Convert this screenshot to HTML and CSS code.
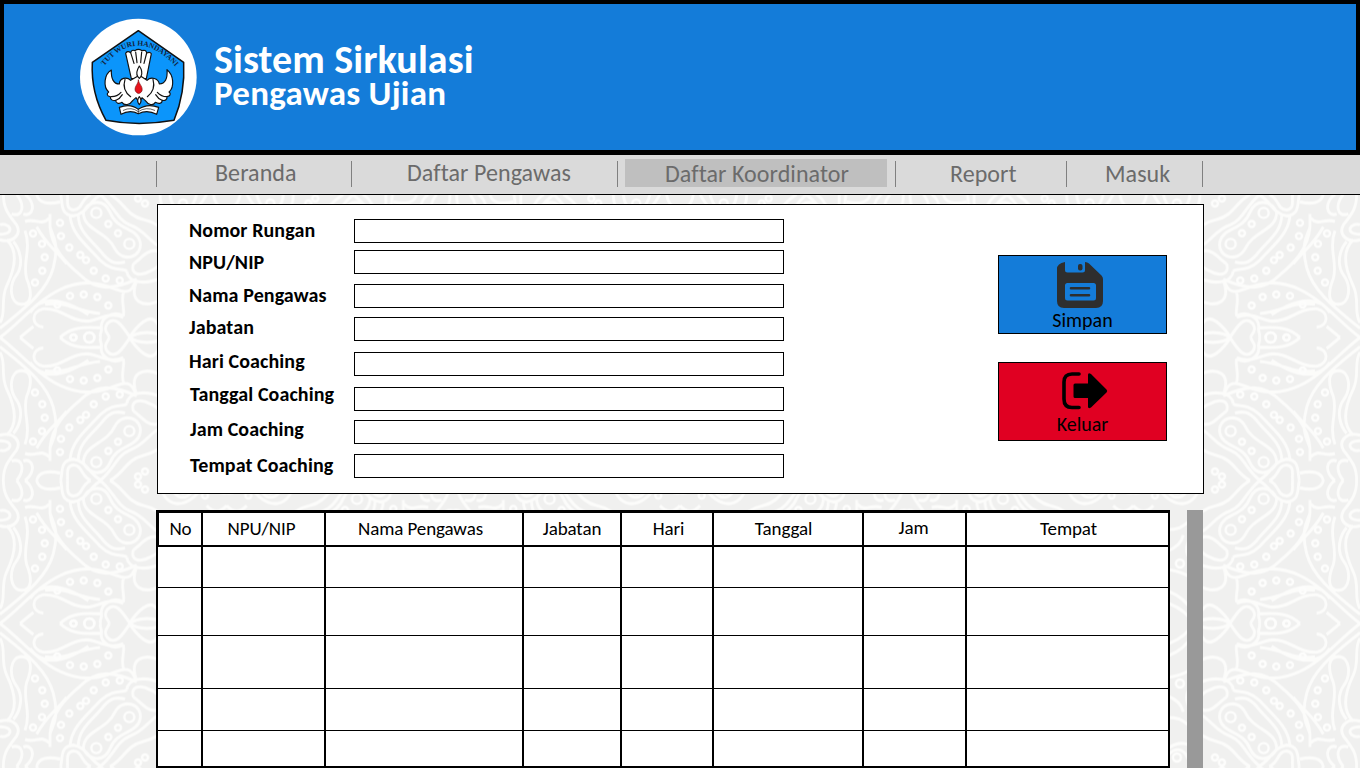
FILE: index.html
```html
<!DOCTYPE html>
<html lang="id">
<head>
<meta charset="utf-8">
<title>Sistem Sirkulasi Pengawas Ujian</title>
<link rel="stylesheet" href="styles.css">
</head>
<body>
<svg class="batik" width="1360" height="574" viewBox="0 194 1360 574" aria-hidden="true">
  <defs>
    <g id="quarter">
      <g transform="scale(.3333 .3686) translate(0 -400)">
        <path d="M0 400C60 440 110 500 180 530S300 548 350 530S400 545 410 558M0 425C60 470 140 520 160 590S155 680 150 700V735M60 400L100 430M180 400C210 425 240 430 302 426M130 428C95 430 90 470 130 478C190 480 210 440 270 445C300 450 330 470 370 455M390 400C365 435 345 460 322 438C308 420 324 412 328 400M370 458C335 475 300 450 304 426C306 415 298 410 302 400M370 458C375 480 360 500 372 528M388 400C410 430 450 470 470 440C485 425 480 410 500 400M410 555C385 495 430 480 480 500C500 520 500 540 480 560M65 490C30 490 25 540 50 570C72 600 60 640 40 660M65 490C95 490 98 520 80 560C66 600 95 640 75 690M0 440C20 470 0 500 20 540C52 600 50 640 20 665M0 665C40 655 65 680 50 705C25 735 10 750 10 788M0 680C25 680 38 690 25 702C10 712 0 705 0 705M35 735C70 725 75 760 50 788M70 735C100 725 110 765 75 788M110 788C115 765 145 760 180 768M75 715C110 725 120 700 150 725M210 730C215 680 260 650 300 610C340 575 370 590 380 580M235 730C235 685 280 660 310 625C335 600 350 600 375 605M150 700C155 640 200 600 240 570C290 525 340 530 410 558M305 788C270 775 262 735 220 730C180 732 188 765 182 788M272 788C240 775 250 748 220 746C195 750 205 770 202 788M250 740C250 690 320 690 345 640C370 600 430 620 420 660C410 700 350 690 330 740C310 780 265 770 250 740M380 580C385 545 440 545 480 560C520 570 530 600 510 630M400 600C390 570 420 565 450 580C480 590 500 620 470 635C440 640 420 610 400 600M300 788C340 760 350 720 390 705C440 690 450 650 500 640M330 788C370 770 380 730 430 720C480 710 500 680 540 660M390 400C410 385 460 380 500 400M500 400C530 450 600 470 680 470M500 430C540 490 600 500 680 500M500 520C560 560 620 540 680 560M530 640C540 600 600 580 680 590M480 788C480 720 560 690 620 788M510 788C515 735 570 720 590 788M540 660C600 640 640 680 680 640M620 720C640 700 660 700 680 720M640 788C645 760 660 750 680 755M90 468C130 520 200 500 265 462M135 490C200 500 230 470 300 465M110 700C140 650 165 640 200 600"/>
      </g>
      <g class="ring">
        <circle cx="57.3" cy="33" r="3"/><circle cx="70" cy="41.6" r="3"/><circle cx="83.7" cy="43" r="3"/><circle cx="97.3" cy="40.5" r="3"/><circle cx="108.3" cy="32" r="3"/><circle cx="35" cy="55" r="3"/><circle cx="42.3" cy="66.7" r="3"/><circle cx="44.7" cy="80.3" r="3"/><circle cx="42" cy="93.6" r="3"/><circle cx="33" cy="104" r="3"/><circle cx="93.7" cy="66.7" r="3"/><circle cx="105.7" cy="59" r="3"/><circle cx="119.7" cy="57" r="3"/><circle cx="69.3" cy="90" r="3"/><circle cx="80.3" cy="82.5" r="3"/><circle cx="86" cy="77.4" r="3"/><circle cx="61" cy="101.4" r="3"/><circle cx="60" cy="114.6" r="3"/><circle cx="73.5" cy="0" r="3"/><circle cx="108.3" cy="113.5" r="3"/><circle cx="118" cy="104.3" r="3"/><circle cx="89.3" cy="0" r="5"/><circle cx="129.3" cy="93.6" r="5"/><circle cx="96.3" cy="124.6" r="5"/><circle cx="145" cy="134" r="3"/><circle cx="138" cy="139" r="3"/><circle cx="183" cy="134" r="4"/><circle cx="205" cy="128" r="3"/><circle cx="180" cy="60" r="4"/><circle cx="205" cy="12" r="4"/>
      </g>
    </g>
    <g id="halftile">
      <use href="#quarter"/>
      <use href="#quarter" transform="scale(1 -1)"/>
    </g>
    <pattern id="lace" x="0" y="194.5" width="453.33" height="286" patternUnits="userSpaceOnUse">
      <g transform="translate(0 143)">
        <use href="#halftile"/>
        <use href="#halftile" transform="translate(453.33 0) scale(-1 1)"/>
      </g>
    </pattern>
  </defs>
  <rect y="194" width="1360" height="574" fill="url(#lace)"/>
</svg>

<header class="banner">
  <svg class="logo" viewBox="0 0 420 420" role="img" aria-label="Tut Wuri Handayani">
    <defs><path id="motto" d="M103 168Q150 107 206 107T318 172"/></defs>
    <circle cx="205" cy="201" r="175" fill="#fff"/>
    <path d="M205 62L341 157Q346 250 312 331Q205 350 108 331Q62 250 67 157Z" fill="#0b95fb" stroke="#111" stroke-width="4.5" stroke-linejoin="round"/>
    <text class="motto"><textPath href="#motto" textLength="255" lengthAdjust="spacingAndGlyphs">TUT WURI HANDAYANI</textPath></text>
    <g fill="#fff" stroke="#111" stroke-width="3.500" stroke-linejoin="round" stroke-linecap="round">
      <path d="M184 206L167 130Q172 121 182 128Q184 118 195 122Q205 114 216 122Q228 118 230 129Q240 124 244 131L229 206Z"/>
      <path d="M182 128L192 160M197 126L201 158M215 126L212 158M230 129L222 160" fill="none"/>
      <path d="M124 180C102 193 99 231 116 246C109 251 111 259 121 260C120 269 128 273 137 271C137 280 147 283 156 277C163 288 180 285 188 272L198 263L208 278L216 263L226 272C235 285 249 288 256 277C268 283 276 280 277 271C286 273 292 268 291 260C301 258 304 251 297 246C314 231 311 194 291 179C293 205 286 222 268 222C265 205 243 199 231 211L208 196L182 211C170 199 149 204 148 222C130 222 123 205 124 180Z"/>
      <path d="M124 260Q142 260 153 247M138 271Q150 266 157 254M290 260Q274 260 262 247M276 271Q264 266 257 254M165 208Q155 240 182 260M249 208Q258 240 232 260" fill="none"/>
      <path d="M148 292Q181 279 205 298Q232 279 266 292L260 313Q232 298 205 311Q179 298 153 313Z"/>
      <path d="M160 301Q184 289 205 305Q228 289 254 301M205 298V311" fill="none" stroke-width="2"/>
      <path d="M208 168Q196 188 203 199L208 205L213 199Q220 185 208 168ZM208 260Q198 272 208 284Q218 272 208 260Z"/>
    </g>
    <path d="M205 209C205 224 192 228 196 243Q206 258 216 243C219 228 207 224 205 209Z" fill="#e8121c" stroke="#711" stroke-width="2"/>
  </svg>
  <h1 class="brand"><span class="brand-top">Sistem Sirkulasi</span><span class="brand-sub">Pengawas Ujian</span></h1>
</header>

<nav class="menu">
  <a class="tab beranda">Beranda</a>
  <a class="tab pengawas">Daftar Pengawas</a>
  <a class="tab koordinator"><span class="current">Daftar Koordinator</span></a>
  <a class="tab report">Report</a>
  <a class="tab masuk">Masuk</a>
</nav>

<main class="content">
  <form class="panel">
    <div class="fields">
      <label class="field"><span>Nomor Rungan</span><input></label>
      <label class="field"><span>NPU/NIP</span><input></label>
      <label class="field"><span>Nama Pengawas</span><input></label>
      <label class="field"><span>Jabatan</span><input></label>
      <label class="field"><span>Hari Coaching</span><input></label>
      <label class="field"><span>Tanggal Coaching</span><input></label>
      <label class="field"><span>Jam Coaching</span><input></label>
      <label class="field"><span>Tempat Coaching</span><input></label>
    </div>
    <div class="actions">
      <button type="button" class="btn save">
        <svg width="46" height="46" viewBox="0 0 46 46"><path fill="#2e2e2e" fill-rule="evenodd" d="M8 0V8Q8 10.500 10.500 10.500H25.500Q28 10.500 28 8V0Q30.500 0 32 1.500L44.500 13.500Q46 15 46 17V39Q46 46 39 46H7Q0 46 0 39V7Q0 1.500 8 0ZM10.500 21Q8 21 8 23.500V36Q8 38.500 10.500 38.500H36.500Q39 38.500 39 36V23.500Q39 21 36.500 21Z"/><rect x="21" y="2" width="4.500" height="6.500" rx="2" fill="#2e2e2e"/><path d="M14 26.300H32M14 33.300H32" stroke="#2e2e2e" stroke-width="2.600" stroke-linecap="round"/></svg>
        <span>Simpan</span>
      </button>
      <button type="button" class="btn exit">
        <svg width="46" height="38" viewBox="0 0 46 38"><path d="M17 2H10Q2 2 2 10V27Q2 35.500 10 35.500H17" fill="none" stroke="#000" stroke-width="3.600" stroke-linecap="round"/><path d="M13 11.500H26V3Q26 0 29 2L44.500 17.500Q46 19 44.500 20.500L29 35.500Q26 37.500 26 34.500V26H13Q11.500 26 11.500 24.500V13Q11.500 11.500 13 11.500Z"/></svg>
        <span>Keluar</span>
      </button>
    </div>
  </form>

  <section class="listing">
    <table class="grid">
      <colgroup><col class="c1"><col class="c2"><col class="c3"><col class="c4"><col class="c5"><col class="c6"><col class="c7"><col class="c8"></colgroup>
      <thead><tr><th>No</th><th>NPU/NIP</th><th>Nama Pengawas</th><th>Jabatan</th><th>Hari</th><th>Tanggal</th><th>Jam</th><th>Tempat</th></tr></thead>
      <tbody>
        <tr class="r1"><td></td><td></td><td></td><td></td><td></td><td></td><td></td><td></td></tr>
        <tr class="r2"><td></td><td></td><td></td><td></td><td></td><td></td><td></td><td></td></tr>
        <tr class="r3"><td></td><td></td><td></td><td></td><td></td><td></td><td></td><td></td></tr>
        <tr class="r4"><td></td><td></td><td></td><td></td><td></td><td></td><td></td><td></td></tr>
        <tr class="r5"><td></td><td></td><td></td><td></td><td></td><td></td><td></td><td></td></tr>
      </tbody>
    </table>
    <div class="scroll"></div>
  </section>
</main>
</body>
</html>
```
FILE: styles.css
```css
* { box-sizing: border-box; }
body { margin: 0; width: 1360px; height: 768px; overflow: hidden; background: #f0f0ef; font-family: Carlito, Calibri, "Open Sans", sans-serif; color: #000; }

.batik { position: absolute; left: 0; top: 194px; z-index: -1; }
.batik path { fill: none; stroke: #fdfdfc; stroke-width: 8.5; opacity: .9; }
.batik .ring { fill: none; stroke: #fdfdfc; stroke-width: 2.4; }

.banner { display: flex; height: 155px; border: 4px solid #000; border-bottom-width: 5px; background: #147cd9; padding: 6px 0 0 66px; }
.logo { width: 140px; height: 140px; flex: none; }
.motto { font: 700 22px "Liberation Serif", serif; fill: #13233a; }
.brand { margin: 32px 0 0 4px; display: flex; flex-direction: column; color: #fff; font-weight: 700; }
.brand-top { font-size: 40px; line-height: 36px; letter-spacing: .12px; }
.brand-sub { font-size: 35px; line-height: 30px; letter-spacing: .25px; }

.menu { display: grid; grid-template-columns: 195px 266px 278px 171px 137px; height: 40px; padding: 6px 0 0 156px; background: #dadada; border-bottom: 1px solid #000; color: #6b6b6b; font-size: 24px; line-height: 23px; letter-spacing: .07px; }
.tab { height: 26px; border-left: 1px solid #808080; white-space: nowrap; }
.beranda { padding-left: 58px; }
.pengawas { padding-left: 55px; }
.koordinator { padding-left: 7px; }
.current { display: block; width: 262px; height: 28px; margin-top: -2px; padding: 3px 0 0 40px; background: #bfbfbf; }
.report { padding: 1px 0 0 54px; }
.masuk { padding: 1px 0 0 38px; border-right: 1px solid #808080; }

.content { padding: 9px 156px 0 157px; }
.panel { display: flex; width: 1047px; height: 290px; background: #fff; border: 1px solid #000; }
.fields { padding: 14px 0 0 31px; width: 840px; }
.field { display: flex; height: 34px; align-items: flex-start; }
.field span { width: 165px; font-size: 20px; font-weight: 700; line-height: 24px; letter-spacing: .1px; }
.field input { width: 430px; height: 24px; border: 1px solid #000; background: #fff; padding: 0 6px; font: inherit; }
.field:nth-child(1) { height: 31px; }
.field:nth-child(1) span { margin-top: -1px; }
.field:nth-child(3) { height: 33px; }
.field:nth-child(3) span { margin-top: -1px; }
.field:nth-child(4) { height: 35px; }
.field:nth-child(4) span { margin-top: -2px; }
.field:nth-child(5) { height: 35px; }
.field:nth-child(5) span { margin-top: -3px; }
.field:nth-child(6) { height: 33px; }
.field:nth-child(6) span { margin-top: -5px; }
.field:nth-child(7) span { margin-top: -3px; }
.field:nth-child(8) span { margin-top: -1px; }
.field:nth-child(n+6) span { padding-left: 1px; }
.actions { padding-top: 50px; display: flex; flex-direction: column; gap: 28px; }
.btn { width: 169px; height: 79px; border: 1px solid #000; padding: 0; display: flex; flex-direction: column; align-items: center; font: 20px/22px Carlito, Calibri, sans-serif; color: #000; }
.save { background: #147cd9; padding-top: 6px; }
.save svg { margin-right: 6px; }
.save span { margin-top: 1px; }
.exit { background: #e00022; padding-top: 9px; }
.exit svg { margin-left: 5px; }
.exit span { margin-top: 3px; }

.listing { display: flex; margin: 16px 0 0 -1px; }
.grid { table-layout: fixed; width: 1014px; border-collapse: separate; border-spacing: 0; border: 0 solid #000; border-width: 3px 0 0 2px; background: #fff; }
.grid th { height: 34px; padding: 0; border-right: 2px solid #000; border-bottom: 2px solid #000; font-size: 19px; line-height: 30px; font-weight: 400; letter-spacing: -.1px; }
.grid th:first-child { border-left: 1px solid #000; }
.grid td { padding: 0; border-right: 2px solid #000; border-bottom: 1px solid #000; }
.c1 { width: 45px; } .c2 { width: 123px; } .c3 { width: 198px; } .c4 { width: 98px; }
.c5 { width: 92px; } .c6 { width: 150px; } .c7 { width: 103px; } .c8 { width: 203px; }
.grid th:nth-child(1) { padding-left: 1px; }
.grid th:nth-child(2) { padding-right: 4px; }
.grid th:nth-child(3) { padding-right: 7px; }
.grid th:nth-child(5) { padding-left: 3px; }
.grid th:nth-child(6) { padding-right: 9px; }
.grid th:nth-child(7) { padding: 0 2px 2px 0; }
.grid th:nth-child(8) { padding: 0 0 1px 2px; }
.r1 { height: 41px; } .r2 { height: 48px; } .r3 { height: 53px; } .r4 { height: 42px; } .r5 { height: 37px; }
.grid .r5 td { border-bottom-width: 2px; }
.scroll { width: 16px; height: 258px; margin-left: 17px; background: #999; }
```
